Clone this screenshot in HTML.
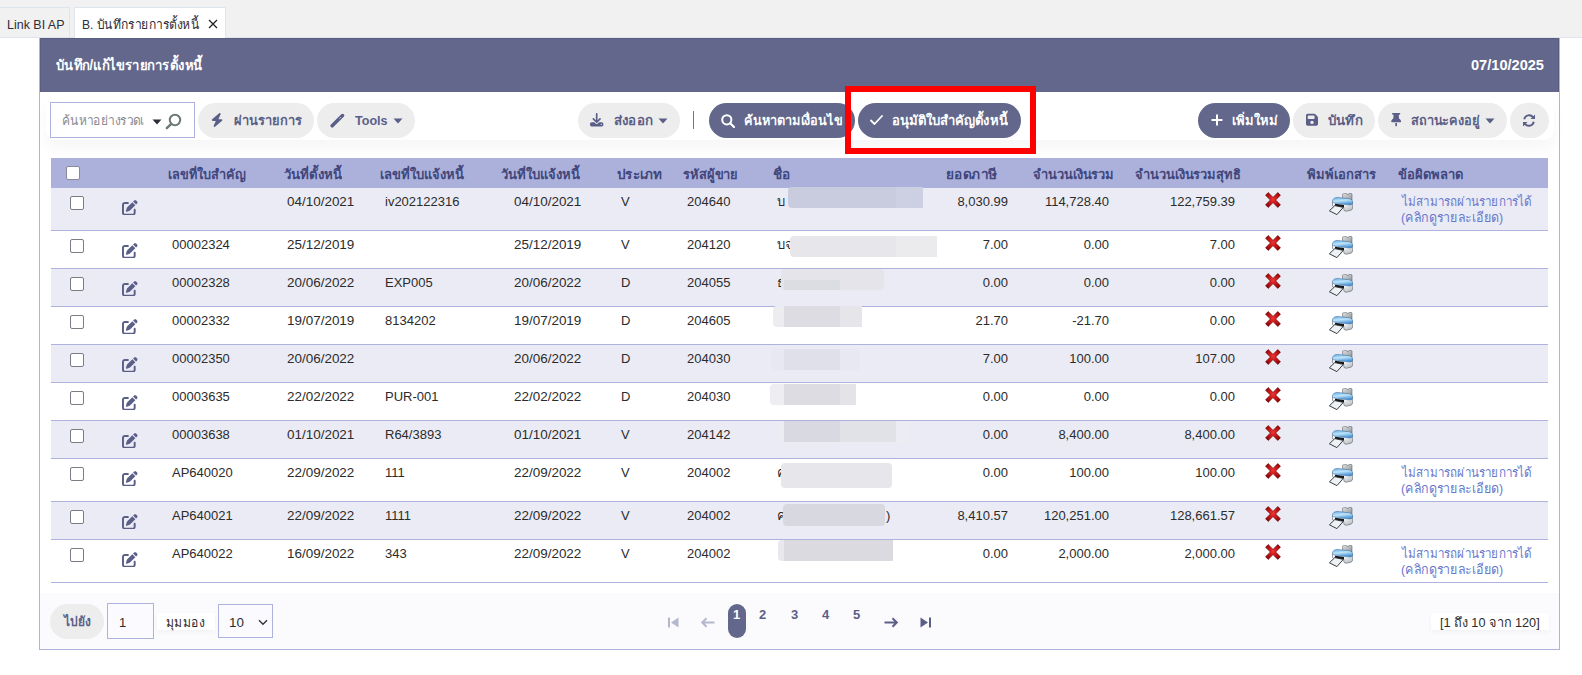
<!DOCTYPE html>
<html><head><meta charset="utf-8">
<style>
*{box-sizing:border-box;margin:0;padding:0}
html,body{width:1582px;height:675px;overflow:hidden;background:#fff}
body{position:relative;font-family:"Liberation Sans",sans-serif;font-size:13px;color:#2b2b2b}
.a{position:absolute;white-space:nowrap}
.t{position:absolute;white-space:nowrap;line-height:17px;height:17px}
.b{font-weight:bold}
.btn{position:absolute;top:103px;height:35px;border-radius:18px;background:#ededed}
.dbtn{position:absolute;top:103px;height:35px;border-radius:18px;background:#62678b}
.bt{position:absolute;line-height:17px;font-weight:bold;color:#5b5f88;white-space:nowrap}
.wt{position:absolute;line-height:17px;font-weight:bold;color:#fff;white-space:nowrap}
.ic{position:absolute}
.row{position:absolute;left:51px;width:1497px;border-bottom:1px solid #aeb3dd}
.cb{position:absolute;width:14px;height:14px;border:1px solid #7c7c88;border-radius:2px;background:#fff}
.th{position:absolute;line-height:17px;font-weight:bold;color:#41467c;white-space:nowrap}
.r{text-align:right}
.blur{position:absolute;border-radius:4px}
</style></head><body>

<svg width="0" height="0" style="position:absolute"><defs><linearGradient id="pb" x1="0" y1="0" x2="0.3" y2="1"><stop offset="0" stop-color="#5aa6e2"/><stop offset="0.5" stop-color="#bfe4fa"/><stop offset="1" stop-color="#4c94d6"/></linearGradient><linearGradient id="pg" x1="0" y1="0" x2="1" y2="1"><stop offset="0" stop-color="#e2e4e5"/><stop offset="1" stop-color="#8e9396"/></linearGradient><linearGradient id="pw" x1="0" y1="0" x2="1" y2="1"><stop offset="0" stop-color="#ffffff"/><stop offset="0.5" stop-color="#f1f3f5"/><stop offset="1" stop-color="#a9b0b5"/></linearGradient><radialGradient id="rx" cx="0.5" cy="0.45" r="0.6"><stop offset="0" stop-color="#f03434"/><stop offset="0.55" stop-color="#c81414"/><stop offset="1" stop-color="#8e0606"/></radialGradient></defs></svg>
<div class="a" style="left:0;top:0;width:1582px;height:38px;background:#f1f1f1;border-bottom:1px solid #dfe5ec"></div>
<div class="a" style="left:-1px;top:7px;width:71px;height:31px;border:1px solid #dfe5ec;background:#f1f1f1"></div>
<div class="t" id="x1" style="left:7.44px;top:16px;transform:scaleX(0.9586);transform-origin:0 0;color:#2e2e3a">Link BI AP</div>
<div class="a" style="left:74px;top:7px;width:152px;height:32px;border:1px solid #dfe5ec;border-bottom:none;background:#fff"></div>
<div class="t" id="x2" style="left:82.47px;top:16px;transform:scaleX(0.9304);transform-origin:0 0;color:#2e2e3a">B. บันทึกรายการตั้งหนี้</div>
<svg class="ic" style="left:208px;top:19px" width="10" height="10" viewBox="0 0 10 10"><path d="M1 1L9 9M9 1L1 9" stroke="#222" stroke-width="1.3"/></svg>
<div class="a" style="left:39px;top:38px;width:1521px;height:612px;border:1px solid #aeb3dd;background:#fff"></div>
<div class="a" style="left:40px;top:38px;width:1519px;height:54px;background:#62678b;border:1px solid #595d81;border-bottom:none"></div>
<div class="t b" id="x3" style="left:56.00px;top:57px;transform:scaleX(0.9338);transform-origin:0 0;color:#fff;font-size:14px">บันทึก/แก้ไขรายการตั้งหนี้</div>
<div class="t b" id="x4" style="left:1470.70px;top:57px;transform:scaleX(1.0414);transform-origin:0 0;color:#fff;font-size:14px">07/10/2025</div>
<div class="a" style="left:46px;top:94px;width:1508px;height:46px;background:#fff;border-radius:10px;box-shadow:0 9px 14px rgba(20,20,60,0.035)"></div>
<div class="a" style="left:50px;top:102px;width:145px;height:36px;border:1px solid #aeb3dd;background:#fff"></div>
<div class="t" id="x5" style="left:61.88px;top:112px;transform:scaleX(0.9227);transform-origin:0 0;color:#8a8a90">ค้นหาอย่างรวดเ</div>
<svg class="ic" style="left:152px;top:119px" width="10" height="6" viewBox="0 0 10 6"><path d="M0.5 0.5H9.5L5 5.5Z" fill="#2a2f3a"/></svg>
<svg class="ic" style="left:165px;top:113px" width="17" height="17" viewBox="0 0 17 17"><circle cx="10" cy="7" r="5.2" fill="none" stroke="#6b7a73" stroke-width="2"/><path d="M6.2 10.8L1.8 15.2" stroke="#6b7a73" stroke-width="2.4" stroke-linecap="round"/></svg>
<div class="btn" style="left:198px;width:116px"></div>
<svg class="ic" style="left:211px;top:113px" width="12.25" height="14" viewBox="0 0 448 512"><path d="M349.4 44.6c5.9-13.7 1.5-29.7-10.6-38.5s-28.6-8-39.9 1.8l-256 224c-10 8.8-13.6 22.9-8.9 35.3S50.7 288 64 288H175.5L98.6 467.4c-5.9 13.7-1.5 29.7 10.6 38.5s28.6 8 39.9-1.8l256-224c10-8.8 13.6-22.9 8.9-35.3s-16.6-20.7-30-20.7H272.5L349.4 44.6z" fill="#5b5f88"/></svg>
<div class="bt" id="x6" style="left:234.00px;top:112px;transform:scaleX(0.9926);transform-origin:0 0;">ผ่านรายการ</div>
<div class="btn" style="left:317px;width:98px"></div>
<svg class="ic" style="left:330px;top:113px" width="15" height="15" viewBox="0 0 15 15"><path d="M2.2 12.8L12.5 2.5" stroke="#5b5f88" stroke-width="3.5" stroke-linecap="round"/><path d="M9.4 5.6L10.9 4.1" stroke="#d0d2de" stroke-width="0.9"/></svg>
<div class="bt" id="x7" style="left:354.60px;top:112px;transform:scaleX(0.9667);transform-origin:0 0;">Tools</div>
<svg class="ic" style="left:393px;top:118px" width="10" height="6" viewBox="0 0 10 6"><path d="M0.5 0.5H9.5L5 5.5Z" fill="#5b5f88"/></svg>
<div class="btn" style="left:578px;width:102px"></div>
<svg class="ic" style="left:590.3px;top:113.3px" width="13.4" height="13.4" viewBox="0 0 512 512"><path d="M288 32c0-17.7-14.3-32-32-32s-32 14.3-32 32V274.7l-73.4-73.4c-12.5-12.5-32.8-12.5-45.3 0s-12.5 32.8 0 45.3l128 128c12.5 12.5 32.8 12.5 45.3 0l128-128c12.5-12.5 12.5-32.8 0-45.3s-32.8-12.5-45.3 0L288 274.7V32zM64 352c-35.3 0-64 28.7-64 64v32c0 35.3 28.7 64 64 64H448c35.3 0 64-28.7 64-64V416c0-35.3-28.7-64-64-64H346.5l-45.3 45.3c-25 25-65.5 25-90.5 0L165.5 352H64zm368 56a24 24 0 1 1 0 48 24 24 0 1 1 0-48z" fill="#5b5f88"/></svg>
<div class="bt" id="x8" style="left:613.77px;top:112px;transform:scaleX(1.0250);transform-origin:0 0;">ส่งออก</div>
<svg class="ic" style="left:658px;top:118px" width="10" height="6" viewBox="0 0 10 6"><path d="M0.5 0.5H9.5L5 5.5Z" fill="#5b5f88"/></svg>
<div class="a" style="left:693px;top:111px;width:1px;height:18px;background:#6d7b72"></div>
<div class="dbtn" style="left:709px;width:146px"></div>
<svg class="ic" style="left:721px;top:114px" width="14" height="14" viewBox="0 0 14 14"><circle cx="5.8" cy="5.8" r="4.6" fill="none" stroke="#fff" stroke-width="2"/><path d="M9.2 9.2L13 13" stroke="#fff" stroke-width="2.2" stroke-linecap="round"/></svg>
<div class="wt" id="x9" style="left:744.42px;top:112px;transform:scaleX(0.9758);transform-origin:0 0;">ค้นหาตามเงื่อนไข</div>
<div class="dbtn" style="left:858px;width:163px"></div>
<svg class="ic" style="left:870px;top:114px" width="13" height="12" viewBox="0 0 13 12"><path d="M1 6.5L4.5 10L12 2" stroke="#fff" stroke-width="1.8" fill="none" stroke-linecap="round" stroke-linejoin="round"/></svg>
<div class="wt" id="x10" style="left:892.39px;top:112px;transform:scaleX(1.0053);transform-origin:0 0;">อนุมัติใบสำคัญตั้งหนี้</div>
<div class="dbtn" style="left:1198px;width:92px"></div>
<svg class="ic" style="left:1211px;top:114px" width="12" height="12" viewBox="0 0 12 12"><path d="M6 0.5V11.5M0.5 6H11.5" stroke="#fff" stroke-width="2"/></svg>
<div class="wt" id="x11" style="left:1232.01px;top:112px;transform:scaleX(0.9932);transform-origin:0 0;">เพิ่มใหม่</div>
<div class="btn" style="left:1293px;width:82px"></div>
<svg class="ic" style="left:1305.8px;top:112.6px" width="12" height="13.7" viewBox="0 0 448 512"><path d="M64 32C28.7 32 0 60.7 0 96V416c0 35.3 28.7 64 64 64H384c35.3 0 64-28.7 64-64V173.3c0-17-6.7-33.300-18.7-45.3L352 50.7C340 38.7 323.7 32 306.7 32H64zm0 96c0-17.7 14.3-32 32-32H288c17.7 0 32 14.3 32 32v64c0 17.7-14.3 32-32 32H96c-17.7 0-32-14.3-32-32V128zM224 288a64 64 0 1 1 0 128 64 64 0 1 1 0-128z" fill="#5b5f88"/></svg>
<div class="bt" id="x12" style="left:1328.00px;top:112px;transform:scaleX(1.0212);transform-origin:0 0;">บันทึก</div>
<div class="btn" style="left:1378px;width:129px"></div>
<svg class="ic" style="left:1391.2px;top:113.4px" width="10.3" height="13.4" viewBox="0 0 384 512"><path d="M32 32C32 14.3 46.3 0 64 0H320c17.7 0 32 14.3 32 32s-14.3 32-32 32H290.5l11.4 148.2c36.7 19.9 65.7 53.2 79.5 94.7l1 3c3.3 9.8 1.6 20.5-4.4 28.8s-15.700 13.3-26 13.3H32c-10.3 0-19.9-4.9-26-13.3s-7.7-19.1-4.4-28.8l1-3c13.8-41.5 42.8-74.8 79.5-94.7L93.5 64H64C46.3 64 32 49.7 32 32zM160 384h64v96c0 17.7-14.3 32-32 32s-32-14.3-32-32V384z" fill="#5b5f88"/></svg>
<div class="bt" id="x13" style="left:1410.82px;top:112px;transform:scaleX(0.9809);transform-origin:0 0;">สถานะคงอยู่</div>
<svg class="ic" style="left:1485px;top:118px" width="10" height="6" viewBox="0 0 10 6"><path d="M0.5 0.5H9.5L5 5.5Z" fill="#5b5f88"/></svg>
<div class="btn" style="left:1510px;width:39px"></div>
<svg class="ic" style="left:1522px;top:114px" width="14" height="13" viewBox="0 0 14 13"><path d="M2.2 5.2A5 5 0 0 1 11 3.2M11.8 7.8A5 5 0 0 1 3 9.8" stroke="#5b5f88" stroke-width="1.9" fill="none"/><path d="M13 0.5V5H8.5Z M1 12.5V8H5.5Z" fill="#5b5f88"/></svg>
<div class="a" style="left:845px;top:86px;width:190.5px;height:67.5px;border:6.8px solid #ff0000"></div>
<div class="a" style="left:51px;top:158px;width:1497px;height:30px;background:#abb1db"></div>
<div class="cb" style="left:66px;top:166px;border-color:#8a8a9a"></div>
<div class="th" id="x14" style="left:168.02px;top:166px;transform:scaleX(0.9795);transform-origin:0 0;">เลขที่ใบสำคัญ</div>
<div class="th" id="x15" style="left:284.00px;top:166px;transform:scaleX(1.0175);transform-origin:0 0;">วันที่ตั้งหนี้</div>
<div class="th" id="x16" style="left:380.00px;top:166px;transform:scaleX(1.0000);transform-origin:0 0;">เลขที่ใบแจ้งหนี้</div>
<div class="th" id="x17" style="left:501.00px;top:166px;transform:scaleX(1.0038);transform-origin:0 0;">วันที่ใบแจ้งหนี้</div>
<div class="th" id="x18" style="left:616.50px;top:166px;transform:scaleX(1.0349);transform-origin:0 0;">ประเภท</div>
<div class="th" id="x19" style="left:682.70px;top:166px;transform:scaleX(0.9873);transform-origin:0 0;">รหัสผู้ขาย</div>
<div class="th" id="x20" style="left:773.25px;top:166px;transform:scaleX(1.0467);transform-origin:0 0;">ชื่อ</div>
<div class="th" id="x21" style="left:946.45px;top:166px;transform:scaleX(1.0489);transform-origin:0 0;">ยอดภาษี</div>
<div class="th" id="x22" style="left:1033.40px;top:166px;transform:scaleX(0.9901);transform-origin:0 0;">จำนวนเงินรวม</div>
<div class="th" id="x23" style="left:1134.60px;top:166px;transform:scaleX(0.9906);transform-origin:0 0;">จำนวนเงินรวมสุทธิ</div>
<div class="th" id="x24" style="left:1307.00px;top:166px;transform:scaleX(1.0000);transform-origin:0 0;">พิมพ์เอกสาร</div>
<div class="th" id="x25" style="left:1397.70px;top:166px;transform:scaleX(1.0000);transform-origin:0 0;">ข้อผิดพลาด</div>
<div class="row" style="top:188px;height:43px;background:#ebebf5"></div>
<div class="cb" style="left:70px;top:196px"></div>
<svg class="ic" style="left:122.3px;top:199.5px" width="15.6" height="15.6" viewBox="0 0 512 512"><path d="M471.6 21.7c-21.9-21.9-57.3-21.9-79.2 0L362.3 51.7l97.9 97.9 30.1-30.1c21.9-21.9 21.9-57.3 0-79.2L471.6 21.7zm-299.2 220c-6.1 6.1-10.8 13.6-13.5 21.9l-29.6 88.8c-2.9 8.6-.6 18.1 5.8 24.6s15.9 8.7 24.6 5.8l88.8-29.6c8.2-2.7 15.7-7.4 21.9-13.5L437.7 172.3 339.7 74.3 172.4 241.7zM96 64C43 64 0 107 0 160V416c0 53 43 96 96 96H352c53 0 96-43 96-96V320c0-17.7-14.3-32-32-32s-32 14.3-32 32v96c0 17.7-14.3 32-32 32H96c-17.7 0-32-14.3-32-32V160c0-17.7 14.3-32 32-32h96c17.7 0 32-14.3 32-32s-14.3-32-32-32H96z" fill="#5b5f88"/></svg>
<div class="t" id="x26" style="left:287px;top:193px;transform:scaleX(1.035);transform-origin:0 0">04/10/2021</div>
<div class="t" id="x27" style="left:385px;top:193px;">iv202122316</div>
<div class="t" id="x28" style="left:514px;top:193px;transform:scaleX(1.035);transform-origin:0 0">04/10/2021</div>
<div class="t" id="x29" style="left:621px;top:193px;">V</div>
<div class="t" id="x30" style="left:687px;top:193px;">204640</div>
<div class="t r" id="x31" style="left:888px;top:193px;width:120px">8,030.99</div>
<div class="t r" id="x32" style="left:989px;top:193px;width:120px">114,728.40</div>
<div class="t r" id="x33" style="left:1115px;top:193px;width:120px">122,759.39</div>
<div class="t" id="x34" style="left:777px;top:193px;">บ</div>
<div class="blur" style="left:788px;top:187px;width:135px;height:21px;background:#c9cbdf;"></div>
<div class="blur" style="left:896px;top:187px;width:27px;height:21px;background:#cdcfe2;border-radius:0"></div>
<svg class="ic" style="left:1265px;top:192px" width="16" height="16" viewBox="0 0 16 16"><path d="M0.6 3.2L3.2 0.6L8 5.4L12.8 0.6L15.4 3.2L10.6 8L15.4 12.8L12.8 15.4L8 10.6L3.2 15.4L0.6 12.8L5.4 8Z" fill="url(#rx)" stroke="#6a0000" stroke-width="0.7" stroke-linejoin="round"/></svg>
<svg class="ic" style="left:1329px;top:193px" width="24" height="23" viewBox="0 0 24 23"><path d="M13.6 7V1.1L14.6 0.2H17.2L18 1.5H19.2L20 0.2H22.2L23 1.1V7Z" fill="url(#pg)" stroke="#5f6366" stroke-width="0.6"/><path d="M3.5 8V12.6L6 14L14.5 13.4L15 17.4L17 18.3L22.3 17.1L23.7 15.2V9Z" fill="url(#pw)" stroke="#5a5f63" stroke-width="0.6" stroke-linejoin="round"/><path d="M3.5 8.2C3.5 5.8 5.5 4.3 9 4.4L20.5 5.9C22.6 6.2 23.7 7.4 23.7 9V10.2C23.5 11.2 22.5 11.9 21 12L8.5 10.6C5.2 10.2 3.5 9.6 3.5 8.6Z" fill="url(#pb)" stroke="#2f6a9c" stroke-width="0.5"/><path d="M6 10.8L15 11.9V14.2L6 13.2Z" fill="#15181b"/><path d="M5.8 12.6L14.3 14.4L7.9 21.6L0.4 17.8Z" fill="#eef2f5" stroke="#24282c" stroke-width="0.9" stroke-linejoin="round"/></svg>
<div class="t" id="x35" style="left:1402.39px;top:193px;transform:scaleX(0.8938);transform-origin:0 0;color:#6879cc">ไม่สามารถผ่านรายการได้</div>
<div class="t" id="x36" style="left:1400.54px;top:209px;transform:scaleX(0.9571);transform-origin:0 0;color:#6879cc">(คลิกดูรายละเอียด)</div>
<div class="row" style="top:231px;height:38px;background:#fff"></div>
<div class="cb" style="left:70px;top:239px"></div>
<svg class="ic" style="left:122.3px;top:242.5px" width="15.6" height="15.6" viewBox="0 0 512 512"><path d="M471.6 21.7c-21.9-21.9-57.3-21.9-79.2 0L362.3 51.7l97.9 97.9 30.1-30.1c21.9-21.9 21.9-57.3 0-79.2L471.6 21.7zm-299.2 220c-6.1 6.1-10.8 13.6-13.5 21.9l-29.6 88.8c-2.9 8.6-.6 18.1 5.8 24.6s15.9 8.7 24.6 5.8l88.8-29.6c8.2-2.7 15.7-7.4 21.9-13.5L437.7 172.3 339.7 74.3 172.4 241.7zM96 64C43 64 0 107 0 160V416c0 53 43 96 96 96H352c53 0 96-43 96-96V320c0-17.7-14.3-32-32-32s-32 14.3-32 32v96c0 17.7-14.3 32-32 32H96c-17.7 0-32-14.3-32-32V160c0-17.7 14.3-32 32-32h96c17.7 0 32-14.3 32-32s-14.3-32-32-32H96z" fill="#5b5f88"/></svg>
<div class="t" id="x37" style="left:172px;top:236px;">00002324</div>
<div class="t" id="x38" style="left:287px;top:236px;transform:scaleX(1.035);transform-origin:0 0">25/12/2019</div>
<div class="t" id="x39" style="left:514px;top:236px;transform:scaleX(1.035);transform-origin:0 0">25/12/2019</div>
<div class="t" id="x40" style="left:621px;top:236px;">V</div>
<div class="t" id="x41" style="left:687px;top:236px;">204120</div>
<div class="t r" id="x42" style="left:888px;top:236px;width:120px">7.00</div>
<div class="t r" id="x43" style="left:989px;top:236px;width:120px">0.00</div>
<div class="t r" id="x44" style="left:1115px;top:236px;width:120px">7.00</div>
<div class="t" id="x45" style="left:777px;top:236px;">บจ</div>
<div class="blur" style="left:790px;top:236px;width:147px;height:21px;background:#e7e7eb;"></div>
<div class="blur" style="left:896px;top:236px;width:41px;height:21px;background:#ebebee;border-radius:0"></div>
<svg class="ic" style="left:1265px;top:235px" width="16" height="16" viewBox="0 0 16 16"><path d="M0.6 3.2L3.2 0.6L8 5.4L12.8 0.6L15.4 3.2L10.6 8L15.4 12.8L12.8 15.4L8 10.6L3.2 15.4L0.6 12.8L5.4 8Z" fill="url(#rx)" stroke="#6a0000" stroke-width="0.7" stroke-linejoin="round"/></svg>
<svg class="ic" style="left:1329px;top:236px" width="24" height="23" viewBox="0 0 24 23"><path d="M13.6 7V1.1L14.6 0.2H17.2L18 1.5H19.2L20 0.2H22.2L23 1.1V7Z" fill="url(#pg)" stroke="#5f6366" stroke-width="0.6"/><path d="M3.5 8V12.6L6 14L14.5 13.4L15 17.4L17 18.3L22.3 17.1L23.7 15.2V9Z" fill="url(#pw)" stroke="#5a5f63" stroke-width="0.6" stroke-linejoin="round"/><path d="M3.5 8.2C3.5 5.8 5.5 4.3 9 4.4L20.5 5.9C22.6 6.2 23.7 7.4 23.7 9V10.2C23.5 11.2 22.5 11.9 21 12L8.5 10.6C5.2 10.2 3.5 9.6 3.5 8.6Z" fill="url(#pb)" stroke="#2f6a9c" stroke-width="0.5"/><path d="M6 10.8L15 11.9V14.2L6 13.2Z" fill="#15181b"/><path d="M5.8 12.6L14.3 14.4L7.9 21.6L0.4 17.8Z" fill="#eef2f5" stroke="#24282c" stroke-width="0.9" stroke-linejoin="round"/></svg>
<div class="row" style="top:269px;height:38px;background:#ebebf5"></div>
<div class="cb" style="left:70px;top:277px"></div>
<svg class="ic" style="left:122.3px;top:280.5px" width="15.6" height="15.6" viewBox="0 0 512 512"><path d="M471.6 21.7c-21.9-21.9-57.3-21.9-79.2 0L362.3 51.7l97.9 97.9 30.1-30.1c21.9-21.9 21.9-57.3 0-79.2L471.6 21.7zm-299.2 220c-6.1 6.1-10.8 13.6-13.5 21.9l-29.6 88.8c-2.9 8.6-.6 18.1 5.8 24.6s15.9 8.7 24.6 5.8l88.8-29.6c8.2-2.7 15.7-7.4 21.9-13.5L437.7 172.3 339.7 74.3 172.4 241.7zM96 64C43 64 0 107 0 160V416c0 53 43 96 96 96H352c53 0 96-43 96-96V320c0-17.7-14.3-32-32-32s-32 14.3-32 32v96c0 17.7-14.3 32-32 32H96c-17.7 0-32-14.3-32-32V160c0-17.7 14.3-32 32-32h96c17.7 0 32-14.3 32-32s-14.3-32-32-32H96z" fill="#5b5f88"/></svg>
<div class="t" id="x46" style="left:172px;top:274px;">00002328</div>
<div class="t" id="x47" style="left:287px;top:274px;transform:scaleX(1.035);transform-origin:0 0">20/06/2022</div>
<div class="t" id="x48" style="left:385px;top:274px;">EXP005</div>
<div class="t" id="x49" style="left:514px;top:274px;transform:scaleX(1.035);transform-origin:0 0">20/06/2022</div>
<div class="t" id="x50" style="left:621px;top:274px;">D</div>
<div class="t" id="x51" style="left:687px;top:274px;">204055</div>
<div class="t r" id="x52" style="left:888px;top:274px;width:120px">0.00</div>
<div class="t r" id="x53" style="left:989px;top:274px;width:120px">0.00</div>
<div class="t r" id="x54" style="left:1115px;top:274px;width:120px">0.00</div>
<div class="t" id="x55" style="left:777px;top:274px;">ธ</div>
<div class="blur" style="left:781px;top:269px;width:103px;height:21px;background:#e4e4ea;"></div>
<div class="blur" style="left:784px;top:280px;width:56px;height:10px;background:#dcdce3;border-radius:0"></div>
<svg class="ic" style="left:1265px;top:273px" width="16" height="16" viewBox="0 0 16 16"><path d="M0.6 3.2L3.2 0.6L8 5.4L12.8 0.6L15.4 3.2L10.6 8L15.4 12.8L12.8 15.4L8 10.6L3.2 15.4L0.6 12.8L5.4 8Z" fill="url(#rx)" stroke="#6a0000" stroke-width="0.7" stroke-linejoin="round"/></svg>
<svg class="ic" style="left:1329px;top:274px" width="24" height="23" viewBox="0 0 24 23"><path d="M13.6 7V1.1L14.6 0.2H17.2L18 1.5H19.2L20 0.2H22.2L23 1.1V7Z" fill="url(#pg)" stroke="#5f6366" stroke-width="0.6"/><path d="M3.5 8V12.6L6 14L14.5 13.4L15 17.4L17 18.3L22.3 17.1L23.7 15.2V9Z" fill="url(#pw)" stroke="#5a5f63" stroke-width="0.6" stroke-linejoin="round"/><path d="M3.5 8.2C3.5 5.8 5.5 4.3 9 4.4L20.5 5.9C22.6 6.2 23.7 7.4 23.7 9V10.2C23.5 11.2 22.5 11.9 21 12L8.5 10.6C5.2 10.2 3.5 9.6 3.5 8.6Z" fill="url(#pb)" stroke="#2f6a9c" stroke-width="0.5"/><path d="M6 10.8L15 11.9V14.2L6 13.2Z" fill="#15181b"/><path d="M5.8 12.6L14.3 14.4L7.9 21.6L0.4 17.8Z" fill="#eef2f5" stroke="#24282c" stroke-width="0.9" stroke-linejoin="round"/></svg>
<div class="row" style="top:307px;height:38px;background:#fff"></div>
<div class="cb" style="left:70px;top:315px"></div>
<svg class="ic" style="left:122.3px;top:318.5px" width="15.6" height="15.6" viewBox="0 0 512 512"><path d="M471.6 21.7c-21.9-21.9-57.3-21.9-79.2 0L362.3 51.7l97.9 97.9 30.1-30.1c21.9-21.9 21.9-57.3 0-79.2L471.6 21.7zm-299.2 220c-6.1 6.1-10.8 13.6-13.5 21.9l-29.6 88.8c-2.9 8.6-.6 18.1 5.8 24.6s15.9 8.7 24.6 5.8l88.8-29.6c8.2-2.7 15.7-7.4 21.9-13.5L437.7 172.3 339.7 74.3 172.4 241.7zM96 64C43 64 0 107 0 160V416c0 53 43 96 96 96H352c53 0 96-43 96-96V320c0-17.7-14.3-32-32-32s-32 14.3-32 32v96c0 17.7-14.3 32-32 32H96c-17.7 0-32-14.3-32-32V160c0-17.7 14.3-32 32-32h96c17.7 0 32-14.3 32-32s-14.3-32-32-32H96z" fill="#5b5f88"/></svg>
<div class="t" id="x56" style="left:172px;top:312px;">00002332</div>
<div class="t" id="x57" style="left:287px;top:312px;transform:scaleX(1.035);transform-origin:0 0">19/07/2019</div>
<div class="t" id="x58" style="left:385px;top:312px;">8134202</div>
<div class="t" id="x59" style="left:514px;top:312px;transform:scaleX(1.035);transform-origin:0 0">19/07/2019</div>
<div class="t" id="x60" style="left:621px;top:312px;">D</div>
<div class="t" id="x61" style="left:687px;top:312px;">204605</div>
<div class="t r" id="x62" style="left:888px;top:312px;width:120px">21.70</div>
<div class="t r" id="x63" style="left:989px;top:312px;width:120px">-21.70</div>
<div class="t r" id="x64" style="left:1115px;top:312px;width:120px">0.00</div>
<div class="blur" style="left:773px;top:306px;width:89px;height:21px;background:#ededf1;"></div>
<div class="blur" style="left:784px;top:306px;width:56px;height:21px;background:#dcdce2;border-radius:0"></div>
<div class="blur" style="left:840px;top:306px;width:22px;height:21px;background:#e6e6ea;border-radius:0"></div>
<svg class="ic" style="left:1265px;top:311px" width="16" height="16" viewBox="0 0 16 16"><path d="M0.6 3.2L3.2 0.6L8 5.4L12.8 0.6L15.4 3.2L10.6 8L15.4 12.8L12.8 15.4L8 10.6L3.2 15.4L0.6 12.8L5.4 8Z" fill="url(#rx)" stroke="#6a0000" stroke-width="0.7" stroke-linejoin="round"/></svg>
<svg class="ic" style="left:1329px;top:312px" width="24" height="23" viewBox="0 0 24 23"><path d="M13.6 7V1.1L14.6 0.2H17.2L18 1.5H19.2L20 0.2H22.2L23 1.1V7Z" fill="url(#pg)" stroke="#5f6366" stroke-width="0.6"/><path d="M3.5 8V12.6L6 14L14.5 13.4L15 17.4L17 18.3L22.3 17.1L23.7 15.2V9Z" fill="url(#pw)" stroke="#5a5f63" stroke-width="0.6" stroke-linejoin="round"/><path d="M3.5 8.2C3.5 5.8 5.5 4.3 9 4.4L20.5 5.9C22.6 6.2 23.7 7.4 23.7 9V10.2C23.5 11.2 22.5 11.9 21 12L8.5 10.6C5.2 10.2 3.5 9.6 3.5 8.6Z" fill="url(#pb)" stroke="#2f6a9c" stroke-width="0.5"/><path d="M6 10.8L15 11.9V14.2L6 13.2Z" fill="#15181b"/><path d="M5.8 12.6L14.3 14.4L7.9 21.6L0.4 17.8Z" fill="#eef2f5" stroke="#24282c" stroke-width="0.9" stroke-linejoin="round"/></svg>
<div class="row" style="top:345px;height:38px;background:#ebebf5"></div>
<div class="cb" style="left:70px;top:353px"></div>
<svg class="ic" style="left:122.3px;top:356.5px" width="15.6" height="15.6" viewBox="0 0 512 512"><path d="M471.6 21.7c-21.9-21.9-57.3-21.9-79.2 0L362.3 51.7l97.9 97.9 30.1-30.1c21.9-21.9 21.9-57.3 0-79.2L471.6 21.7zm-299.2 220c-6.1 6.1-10.8 13.6-13.5 21.9l-29.6 88.8c-2.9 8.6-.6 18.1 5.8 24.6s15.9 8.7 24.6 5.8l88.8-29.6c8.2-2.7 15.7-7.4 21.9-13.5L437.7 172.3 339.7 74.3 172.4 241.7zM96 64C43 64 0 107 0 160V416c0 53 43 96 96 96H352c53 0 96-43 96-96V320c0-17.7-14.3-32-32-32s-32 14.3-32 32v96c0 17.7-14.3 32-32 32H96c-17.7 0-32-14.3-32-32V160c0-17.7 14.3-32 32-32h96c17.7 0 32-14.3 32-32s-14.3-32-32-32H96z" fill="#5b5f88"/></svg>
<div class="t" id="x65" style="left:172px;top:350px;">00002350</div>
<div class="t" id="x66" style="left:287px;top:350px;transform:scaleX(1.035);transform-origin:0 0">20/06/2022</div>
<div class="t" id="x67" style="left:514px;top:350px;transform:scaleX(1.035);transform-origin:0 0">20/06/2022</div>
<div class="t" id="x68" style="left:621px;top:350px;">D</div>
<div class="t" id="x69" style="left:687px;top:350px;">204030</div>
<div class="t r" id="x70" style="left:888px;top:350px;width:120px">7.00</div>
<div class="t r" id="x71" style="left:989px;top:350px;width:120px">100.00</div>
<div class="t r" id="x72" style="left:1115px;top:350px;width:120px">107.00</div>
<div class="blur" style="left:771px;top:349px;width:89px;height:21px;background:#e8e8f2;"></div>
<div class="blur" style="left:784px;top:349px;width:56px;height:21px;background:#e0e0ea;border-radius:0"></div>
<svg class="ic" style="left:1265px;top:349px" width="16" height="16" viewBox="0 0 16 16"><path d="M0.6 3.2L3.2 0.6L8 5.4L12.8 0.6L15.4 3.2L10.6 8L15.4 12.8L12.8 15.4L8 10.6L3.2 15.4L0.6 12.8L5.4 8Z" fill="url(#rx)" stroke="#6a0000" stroke-width="0.7" stroke-linejoin="round"/></svg>
<svg class="ic" style="left:1329px;top:350px" width="24" height="23" viewBox="0 0 24 23"><path d="M13.6 7V1.1L14.6 0.2H17.2L18 1.5H19.2L20 0.2H22.2L23 1.1V7Z" fill="url(#pg)" stroke="#5f6366" stroke-width="0.6"/><path d="M3.5 8V12.6L6 14L14.5 13.4L15 17.4L17 18.3L22.3 17.1L23.7 15.2V9Z" fill="url(#pw)" stroke="#5a5f63" stroke-width="0.6" stroke-linejoin="round"/><path d="M3.5 8.2C3.5 5.8 5.5 4.3 9 4.4L20.5 5.9C22.6 6.2 23.7 7.4 23.7 9V10.2C23.5 11.2 22.5 11.9 21 12L8.5 10.6C5.2 10.2 3.5 9.6 3.5 8.6Z" fill="url(#pb)" stroke="#2f6a9c" stroke-width="0.5"/><path d="M6 10.8L15 11.9V14.2L6 13.2Z" fill="#15181b"/><path d="M5.8 12.6L14.3 14.4L7.9 21.6L0.4 17.8Z" fill="#eef2f5" stroke="#24282c" stroke-width="0.9" stroke-linejoin="round"/></svg>
<div class="row" style="top:383px;height:38px;background:#fff"></div>
<div class="cb" style="left:70px;top:391px"></div>
<svg class="ic" style="left:122.3px;top:394.5px" width="15.6" height="15.6" viewBox="0 0 512 512"><path d="M471.6 21.7c-21.9-21.9-57.3-21.9-79.2 0L362.3 51.7l97.9 97.9 30.1-30.1c21.9-21.9 21.9-57.3 0-79.2L471.6 21.7zm-299.2 220c-6.1 6.1-10.8 13.6-13.5 21.9l-29.6 88.8c-2.9 8.6-.6 18.1 5.8 24.6s15.9 8.7 24.6 5.8l88.8-29.6c8.2-2.7 15.7-7.4 21.9-13.5L437.7 172.3 339.7 74.3 172.4 241.7zM96 64C43 64 0 107 0 160V416c0 53 43 96 96 96H352c53 0 96-43 96-96V320c0-17.7-14.3-32-32-32s-32 14.3-32 32v96c0 17.7-14.3 32-32 32H96c-17.7 0-32-14.3-32-32V160c0-17.7 14.3-32 32-32h96c17.7 0 32-14.3 32-32s-14.3-32-32-32H96z" fill="#5b5f88"/></svg>
<div class="t" id="x73" style="left:172px;top:388px;">00003635</div>
<div class="t" id="x74" style="left:287px;top:388px;transform:scaleX(1.035);transform-origin:0 0">22/02/2022</div>
<div class="t" id="x75" style="left:385px;top:388px;">PUR-001</div>
<div class="t" id="x76" style="left:514px;top:388px;transform:scaleX(1.035);transform-origin:0 0">22/02/2022</div>
<div class="t" id="x77" style="left:621px;top:388px;">D</div>
<div class="t" id="x78" style="left:687px;top:388px;">204030</div>
<div class="t r" id="x79" style="left:888px;top:388px;width:120px">0.00</div>
<div class="t r" id="x80" style="left:989px;top:388px;width:120px">0.00</div>
<div class="t r" id="x81" style="left:1115px;top:388px;width:120px">0.00</div>
<div class="blur" style="left:770px;top:384px;width:86px;height:21px;background:#ededf2;"></div>
<div class="blur" style="left:784px;top:384px;width:56px;height:21px;background:#dcdce2;border-radius:0"></div>
<div class="blur" style="left:840px;top:384px;width:16px;height:21px;background:#e4e4e8;border-radius:0"></div>
<svg class="ic" style="left:1265px;top:387px" width="16" height="16" viewBox="0 0 16 16"><path d="M0.6 3.2L3.2 0.6L8 5.4L12.8 0.6L15.4 3.2L10.6 8L15.4 12.8L12.8 15.4L8 10.6L3.2 15.4L0.6 12.8L5.4 8Z" fill="url(#rx)" stroke="#6a0000" stroke-width="0.7" stroke-linejoin="round"/></svg>
<svg class="ic" style="left:1329px;top:388px" width="24" height="23" viewBox="0 0 24 23"><path d="M13.6 7V1.1L14.6 0.2H17.2L18 1.5H19.2L20 0.2H22.2L23 1.1V7Z" fill="url(#pg)" stroke="#5f6366" stroke-width="0.6"/><path d="M3.5 8V12.6L6 14L14.5 13.4L15 17.4L17 18.3L22.3 17.1L23.7 15.2V9Z" fill="url(#pw)" stroke="#5a5f63" stroke-width="0.6" stroke-linejoin="round"/><path d="M3.5 8.2C3.5 5.8 5.5 4.3 9 4.4L20.5 5.9C22.6 6.2 23.7 7.4 23.7 9V10.2C23.5 11.2 22.5 11.9 21 12L8.5 10.6C5.2 10.2 3.5 9.6 3.5 8.6Z" fill="url(#pb)" stroke="#2f6a9c" stroke-width="0.5"/><path d="M6 10.8L15 11.9V14.2L6 13.2Z" fill="#15181b"/><path d="M5.8 12.6L14.3 14.4L7.9 21.6L0.4 17.8Z" fill="#eef2f5" stroke="#24282c" stroke-width="0.9" stroke-linejoin="round"/></svg>
<div class="row" style="top:421px;height:38px;background:#ebebf5"></div>
<div class="cb" style="left:70px;top:429px"></div>
<svg class="ic" style="left:122.3px;top:432.5px" width="15.6" height="15.6" viewBox="0 0 512 512"><path d="M471.6 21.7c-21.9-21.9-57.3-21.9-79.2 0L362.3 51.7l97.9 97.9 30.1-30.1c21.9-21.9 21.9-57.3 0-79.2L471.6 21.7zm-299.2 220c-6.1 6.1-10.8 13.6-13.5 21.9l-29.6 88.8c-2.9 8.6-.6 18.1 5.8 24.6s15.9 8.7 24.6 5.8l88.8-29.6c8.2-2.7 15.7-7.4 21.9-13.5L437.7 172.3 339.7 74.3 172.4 241.7zM96 64C43 64 0 107 0 160V416c0 53 43 96 96 96H352c53 0 96-43 96-96V320c0-17.7-14.3-32-32-32s-32 14.3-32 32v96c0 17.7-14.3 32-32 32H96c-17.7 0-32-14.3-32-32V160c0-17.7 14.3-32 32-32h96c17.7 0 32-14.3 32-32s-14.3-32-32-32H96z" fill="#5b5f88"/></svg>
<div class="t" id="x82" style="left:172px;top:426px;">00003638</div>
<div class="t" id="x83" style="left:287px;top:426px;transform:scaleX(1.035);transform-origin:0 0">01/10/2021</div>
<div class="t" id="x84" style="left:385px;top:426px;">R64/3893</div>
<div class="t" id="x85" style="left:514px;top:426px;transform:scaleX(1.035);transform-origin:0 0">01/10/2021</div>
<div class="t" id="x86" style="left:621px;top:426px;">V</div>
<div class="t" id="x87" style="left:687px;top:426px;">204142</div>
<div class="t r" id="x88" style="left:888px;top:426px;width:120px">0.00</div>
<div class="t r" id="x89" style="left:989px;top:426px;width:120px">8,400.00</div>
<div class="t r" id="x90" style="left:1115px;top:426px;width:120px">8,400.00</div>
<div class="blur" style="left:780px;top:421px;width:129px;height:21px;background:#ececf3;"></div>
<div class="blur" style="left:784px;top:421px;width:56px;height:21px;background:#d9d9e2;border-radius:0"></div>
<div class="blur" style="left:840px;top:421px;width:56px;height:21px;background:#e1e1e8;border-radius:0"></div>
<svg class="ic" style="left:1265px;top:425px" width="16" height="16" viewBox="0 0 16 16"><path d="M0.6 3.2L3.2 0.6L8 5.4L12.8 0.6L15.4 3.2L10.6 8L15.4 12.8L12.8 15.4L8 10.6L3.2 15.4L0.6 12.8L5.4 8Z" fill="url(#rx)" stroke="#6a0000" stroke-width="0.7" stroke-linejoin="round"/></svg>
<svg class="ic" style="left:1329px;top:426px" width="24" height="23" viewBox="0 0 24 23"><path d="M13.6 7V1.1L14.6 0.2H17.2L18 1.5H19.2L20 0.2H22.2L23 1.1V7Z" fill="url(#pg)" stroke="#5f6366" stroke-width="0.6"/><path d="M3.5 8V12.6L6 14L14.5 13.4L15 17.4L17 18.3L22.3 17.1L23.7 15.2V9Z" fill="url(#pw)" stroke="#5a5f63" stroke-width="0.6" stroke-linejoin="round"/><path d="M3.5 8.2C3.5 5.8 5.5 4.3 9 4.4L20.5 5.9C22.6 6.2 23.7 7.4 23.7 9V10.2C23.5 11.2 22.5 11.9 21 12L8.5 10.6C5.2 10.2 3.5 9.6 3.5 8.6Z" fill="url(#pb)" stroke="#2f6a9c" stroke-width="0.5"/><path d="M6 10.8L15 11.9V14.2L6 13.2Z" fill="#15181b"/><path d="M5.8 12.6L14.3 14.4L7.9 21.6L0.4 17.8Z" fill="#eef2f5" stroke="#24282c" stroke-width="0.9" stroke-linejoin="round"/></svg>
<div class="row" style="top:459px;height:43px;background:#fff"></div>
<div class="cb" style="left:70px;top:467px"></div>
<svg class="ic" style="left:122.3px;top:470.5px" width="15.6" height="15.6" viewBox="0 0 512 512"><path d="M471.6 21.7c-21.9-21.9-57.3-21.9-79.2 0L362.3 51.7l97.9 97.9 30.1-30.1c21.9-21.9 21.9-57.3 0-79.2L471.6 21.7zm-299.2 220c-6.1 6.1-10.8 13.6-13.5 21.9l-29.6 88.8c-2.9 8.6-.6 18.1 5.8 24.6s15.9 8.7 24.6 5.8l88.8-29.6c8.2-2.7 15.7-7.4 21.9-13.5L437.7 172.3 339.7 74.3 172.4 241.7zM96 64C43 64 0 107 0 160V416c0 53 43 96 96 96H352c53 0 96-43 96-96V320c0-17.7-14.3-32-32-32s-32 14.3-32 32v96c0 17.7-14.3 32-32 32H96c-17.7 0-32-14.3-32-32V160c0-17.7 14.3-32 32-32h96c17.7 0 32-14.3 32-32s-14.3-32-32-32H96z" fill="#5b5f88"/></svg>
<div class="t" id="x91" style="left:172px;top:464px;">AP640020</div>
<div class="t" id="x92" style="left:287px;top:464px;transform:scaleX(1.035);transform-origin:0 0">22/09/2022</div>
<div class="t" id="x93" style="left:385px;top:464px;">111</div>
<div class="t" id="x94" style="left:514px;top:464px;transform:scaleX(1.035);transform-origin:0 0">22/09/2022</div>
<div class="t" id="x95" style="left:621px;top:464px;">V</div>
<div class="t" id="x96" style="left:687px;top:464px;">204002</div>
<div class="t r" id="x97" style="left:888px;top:464px;width:120px">0.00</div>
<div class="t r" id="x98" style="left:989px;top:464px;width:120px">100.00</div>
<div class="t r" id="x99" style="left:1115px;top:464px;width:120px">100.00</div>
<div class="t" id="x100" style="left:777px;top:464px;">ค</div>
<div class="blur" style="left:781px;top:463px;width:111px;height:25px;background:#e7e7eb;"></div>
<svg class="ic" style="left:1265px;top:463px" width="16" height="16" viewBox="0 0 16 16"><path d="M0.6 3.2L3.2 0.6L8 5.4L12.8 0.6L15.4 3.2L10.6 8L15.4 12.8L12.8 15.4L8 10.6L3.2 15.4L0.6 12.8L5.4 8Z" fill="url(#rx)" stroke="#6a0000" stroke-width="0.7" stroke-linejoin="round"/></svg>
<svg class="ic" style="left:1329px;top:464px" width="24" height="23" viewBox="0 0 24 23"><path d="M13.6 7V1.1L14.6 0.2H17.2L18 1.5H19.2L20 0.2H22.2L23 1.1V7Z" fill="url(#pg)" stroke="#5f6366" stroke-width="0.6"/><path d="M3.5 8V12.6L6 14L14.5 13.4L15 17.4L17 18.3L22.3 17.1L23.7 15.2V9Z" fill="url(#pw)" stroke="#5a5f63" stroke-width="0.6" stroke-linejoin="round"/><path d="M3.5 8.2C3.5 5.8 5.5 4.3 9 4.4L20.5 5.9C22.6 6.2 23.7 7.4 23.7 9V10.2C23.5 11.2 22.5 11.9 21 12L8.5 10.6C5.2 10.2 3.5 9.6 3.5 8.6Z" fill="url(#pb)" stroke="#2f6a9c" stroke-width="0.5"/><path d="M6 10.8L15 11.9V14.2L6 13.2Z" fill="#15181b"/><path d="M5.8 12.6L14.3 14.4L7.9 21.6L0.4 17.8Z" fill="#eef2f5" stroke="#24282c" stroke-width="0.9" stroke-linejoin="round"/></svg>
<div class="t" id="x101" style="left:1402.39px;top:464px;transform:scaleX(0.8938);transform-origin:0 0;color:#6879cc">ไม่สามารถผ่านรายการได้</div>
<div class="t" id="x102" style="left:1400.54px;top:480px;transform:scaleX(0.9571);transform-origin:0 0;color:#6879cc">(คลิกดูรายละเอียด)</div>
<div class="row" style="top:502px;height:38px;background:#ebebf5"></div>
<div class="cb" style="left:70px;top:510px"></div>
<svg class="ic" style="left:122.3px;top:513.5px" width="15.6" height="15.6" viewBox="0 0 512 512"><path d="M471.6 21.7c-21.9-21.9-57.3-21.9-79.2 0L362.3 51.7l97.9 97.9 30.1-30.1c21.9-21.9 21.9-57.3 0-79.2L471.6 21.7zm-299.2 220c-6.1 6.1-10.8 13.6-13.5 21.9l-29.6 88.8c-2.9 8.6-.6 18.1 5.8 24.6s15.9 8.7 24.6 5.8l88.8-29.6c8.2-2.7 15.7-7.4 21.9-13.5L437.7 172.3 339.7 74.3 172.4 241.7zM96 64C43 64 0 107 0 160V416c0 53 43 96 96 96H352c53 0 96-43 96-96V320c0-17.7-14.3-32-32-32s-32 14.3-32 32v96c0 17.7-14.3 32-32 32H96c-17.7 0-32-14.3-32-32V160c0-17.7 14.3-32 32-32h96c17.7 0 32-14.3 32-32s-14.3-32-32-32H96z" fill="#5b5f88"/></svg>
<div class="t" id="x103" style="left:172px;top:507px;">AP640021</div>
<div class="t" id="x104" style="left:287px;top:507px;transform:scaleX(1.035);transform-origin:0 0">22/09/2022</div>
<div class="t" id="x105" style="left:385px;top:507px;">1111</div>
<div class="t" id="x106" style="left:514px;top:507px;transform:scaleX(1.035);transform-origin:0 0">22/09/2022</div>
<div class="t" id="x107" style="left:621px;top:507px;">V</div>
<div class="t" id="x108" style="left:687px;top:507px;">204002</div>
<div class="t r" id="x109" style="left:888px;top:507px;width:120px">8,410.57</div>
<div class="t r" id="x110" style="left:989px;top:507px;width:120px">120,251.00</div>
<div class="t r" id="x111" style="left:1115px;top:507px;width:120px">128,661.57</div>
<div class="t" id="x112" style="left:777px;top:507px;">ค</div>
<div class="t" id="x113" style="left:886px;top:507px;">)</div>
<div class="blur" style="left:783px;top:504px;width:102px;height:22px;background:#d8d8e1;"></div>
<svg class="ic" style="left:1265px;top:506px" width="16" height="16" viewBox="0 0 16 16"><path d="M0.6 3.2L3.2 0.6L8 5.4L12.8 0.6L15.4 3.2L10.6 8L15.4 12.8L12.8 15.4L8 10.6L3.2 15.4L0.6 12.8L5.4 8Z" fill="url(#rx)" stroke="#6a0000" stroke-width="0.7" stroke-linejoin="round"/></svg>
<svg class="ic" style="left:1329px;top:507px" width="24" height="23" viewBox="0 0 24 23"><path d="M13.6 7V1.1L14.6 0.2H17.2L18 1.5H19.2L20 0.2H22.2L23 1.1V7Z" fill="url(#pg)" stroke="#5f6366" stroke-width="0.6"/><path d="M3.5 8V12.6L6 14L14.5 13.4L15 17.4L17 18.3L22.3 17.1L23.7 15.2V9Z" fill="url(#pw)" stroke="#5a5f63" stroke-width="0.6" stroke-linejoin="round"/><path d="M3.5 8.2C3.5 5.8 5.5 4.3 9 4.4L20.5 5.9C22.6 6.2 23.7 7.4 23.7 9V10.2C23.5 11.2 22.5 11.9 21 12L8.5 10.6C5.2 10.2 3.5 9.6 3.5 8.6Z" fill="url(#pb)" stroke="#2f6a9c" stroke-width="0.5"/><path d="M6 10.8L15 11.9V14.2L6 13.2Z" fill="#15181b"/><path d="M5.8 12.6L14.3 14.4L7.9 21.6L0.4 17.8Z" fill="#eef2f5" stroke="#24282c" stroke-width="0.9" stroke-linejoin="round"/></svg>
<div class="row" style="top:540px;height:43px;background:#fff"></div>
<div class="cb" style="left:70px;top:548px"></div>
<svg class="ic" style="left:122.3px;top:551.5px" width="15.6" height="15.6" viewBox="0 0 512 512"><path d="M471.6 21.7c-21.9-21.9-57.3-21.9-79.2 0L362.3 51.7l97.9 97.9 30.1-30.1c21.9-21.9 21.9-57.3 0-79.2L471.6 21.7zm-299.2 220c-6.1 6.1-10.8 13.6-13.5 21.9l-29.6 88.8c-2.9 8.6-.6 18.1 5.8 24.6s15.9 8.7 24.6 5.8l88.8-29.6c8.2-2.7 15.7-7.4 21.9-13.5L437.7 172.3 339.7 74.3 172.4 241.7zM96 64C43 64 0 107 0 160V416c0 53 43 96 96 96H352c53 0 96-43 96-96V320c0-17.7-14.3-32-32-32s-32 14.3-32 32v96c0 17.7-14.3 32-32 32H96c-17.7 0-32-14.3-32-32V160c0-17.7 14.3-32 32-32h96c17.7 0 32-14.3 32-32s-14.3-32-32-32H96z" fill="#5b5f88"/></svg>
<div class="t" id="x114" style="left:172px;top:545px;">AP640022</div>
<div class="t" id="x115" style="left:287px;top:545px;transform:scaleX(1.035);transform-origin:0 0">16/09/2022</div>
<div class="t" id="x116" style="left:385px;top:545px;">343</div>
<div class="t" id="x117" style="left:514px;top:545px;transform:scaleX(1.035);transform-origin:0 0">22/09/2022</div>
<div class="t" id="x118" style="left:621px;top:545px;">V</div>
<div class="t" id="x119" style="left:687px;top:545px;">204002</div>
<div class="t r" id="x120" style="left:888px;top:545px;width:120px">0.00</div>
<div class="t r" id="x121" style="left:989px;top:545px;width:120px">2,000.00</div>
<div class="t r" id="x122" style="left:1115px;top:545px;width:120px">2,000.00</div>
<div class="blur" style="left:778px;top:540px;width:115px;height:21px;background:#e8e8ee;"></div>
<div class="blur" style="left:784px;top:540px;width:109px;height:21px;background:#dadae0;border-radius:0"></div>
<svg class="ic" style="left:1265px;top:544px" width="16" height="16" viewBox="0 0 16 16"><path d="M0.6 3.2L3.2 0.6L8 5.4L12.8 0.6L15.4 3.2L10.6 8L15.4 12.8L12.8 15.4L8 10.6L3.2 15.4L0.6 12.8L5.4 8Z" fill="url(#rx)" stroke="#6a0000" stroke-width="0.7" stroke-linejoin="round"/></svg>
<svg class="ic" style="left:1329px;top:545px" width="24" height="23" viewBox="0 0 24 23"><path d="M13.6 7V1.1L14.6 0.2H17.2L18 1.5H19.2L20 0.2H22.2L23 1.1V7Z" fill="url(#pg)" stroke="#5f6366" stroke-width="0.6"/><path d="M3.5 8V12.6L6 14L14.5 13.4L15 17.4L17 18.3L22.3 17.1L23.7 15.2V9Z" fill="url(#pw)" stroke="#5a5f63" stroke-width="0.6" stroke-linejoin="round"/><path d="M3.5 8.2C3.5 5.8 5.5 4.3 9 4.4L20.5 5.9C22.6 6.2 23.7 7.4 23.7 9V10.2C23.5 11.2 22.5 11.9 21 12L8.5 10.6C5.2 10.2 3.5 9.6 3.5 8.6Z" fill="url(#pb)" stroke="#2f6a9c" stroke-width="0.5"/><path d="M6 10.8L15 11.9V14.2L6 13.2Z" fill="#15181b"/><path d="M5.8 12.6L14.3 14.4L7.9 21.6L0.4 17.8Z" fill="#eef2f5" stroke="#24282c" stroke-width="0.9" stroke-linejoin="round"/></svg>
<div class="t" id="x123" style="left:1402.39px;top:545px;transform:scaleX(0.8938);transform-origin:0 0;color:#6879cc">ไม่สามารถผ่านรายการได้</div>
<div class="t" id="x124" style="left:1400.54px;top:561px;transform:scaleX(0.9571);transform-origin:0 0;color:#6879cc">(คลิกดูรายละเอียด)</div>
<div class="a" style="left:40px;top:593px;width:1519px;height:56px;background:#fbfbfd"></div>
<div class="a" style="left:50px;top:604px;width:54px;height:35px;border-radius:18px;background:#ededed"></div>
<div class="t b" id="x125" style="left:63.92px;top:613px;transform:scaleX(0.9200);transform-origin:0 0;color:#5b5f88">ไปยัง</div>
<div class="a" style="left:107px;top:603px;width:47px;height:36px;border:1px solid #aeb3dd;background:#fbfbff"></div>
<div class="t" id="x126" style="left:119px;top:614px;">1</div>
<div class="a" style="left:157px;top:613px;width:58px;height:17px;background:#fff;box-shadow:0 2px 5px rgba(0,0,0,0.04)"></div>
<div class="t" id="x127" style="left:166.07px;top:614px;transform:scaleX(0.9325);transform-origin:0 0;">มุมมอง</div>
<div class="a" style="left:218px;top:604px;width:55px;height:34px;border:1px solid #aeb3dd;background:#fbfbff"></div>
<div class="t" id="x128" style="left:228.57px;top:614px;transform:scaleX(1.0308);transform-origin:0 0;">10</div>
<svg class="ic" style="left:258px;top:619px" width="10" height="7" viewBox="0 0 10 7"><path d="M1 1.2L5 5.2L9 1.2" stroke="#333" stroke-width="1.4" fill="none"/></svg>
<svg class="ic" style="left:668px;top:617px" width="11" height="11" viewBox="0 0 11 11"><path d="M1 0.5V10.5" stroke="#b5b8cc" stroke-width="2"/><path d="M10.5 0.5V10.5L3 5.5Z" fill="#b5b8cc"/></svg>
<svg class="ic" style="left:701px;top:617px" width="14" height="11" viewBox="0 0 14 11"><path d="M13.5 5.5H1.5M5.5 1.2L1.2 5.5L5.5 9.8" stroke="#b5b8cc" stroke-width="2" fill="none"/></svg>
<div class="a" style="left:728px;top:604px;width:18px;height:34px;border-radius:9px;background:#62678b"></div>
<div class="t b" id="x129" style="left:733px;top:606px;color:#fff">1</div>
<div class="t b" id="x130" style="left:759px;top:606px;color:#5b5f88">2</div>
<div class="t b" id="x131" style="left:791px;top:606px;color:#5b5f88">3</div>
<div class="t b" id="x132" style="left:822px;top:606px;color:#5b5f88">4</div>
<div class="t b" id="x133" style="left:853px;top:606px;color:#5b5f88">5</div>
<svg class="ic" style="left:884px;top:617px" width="14" height="11" viewBox="0 0 14 11"><path d="M0.5 5.5H12.5M8.5 1.2L12.8 5.5L8.5 9.8" stroke="#5b5f88" stroke-width="2" fill="none"/></svg>
<svg class="ic" style="left:920px;top:617px" width="11" height="11" viewBox="0 0 11 11"><path d="M10 0.5V10.5" stroke="#5b5f88" stroke-width="2"/><path d="M0.5 0.5V10.5L8 5.5Z" fill="#5b5f88"/></svg>
<div class="a" style="left:1431px;top:613px;width:118px;height:17px;background:#fff;box-shadow:0 2px 5px rgba(0,0,0,0.04)"></div>
<div class="t" id="x134" style="left:1440.02px;top:614px;transform:scaleX(0.9770);transform-origin:0 0;">[1 ถึง 10 จาก 120]</div>
</body></html>
